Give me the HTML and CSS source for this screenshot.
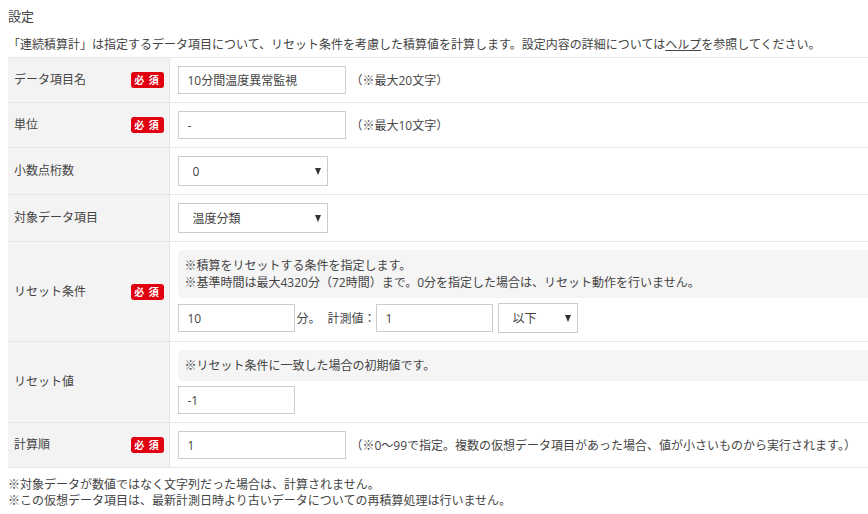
FILE: index.html
```html
<!DOCTYPE html>
<html lang="ja">
<head>
<meta charset="utf-8">
<title>設定</title>
<link rel="stylesheet" href="styles.css">
</head>
<body>
<h2 class="title">設定</h2>
<p class="desc">「連続積算計」は指定するデータ項目について、リセット条件を考慮した積算値を計算します。設定内容の詳細については<a class="link" href="#">ヘルプ</a>を参照してください。</p>
<table class="form">
  <tr>
    <th><div class="lbl"><span>データ項目名</span><span class="req">必 須</span></div></th>
    <td><div class="line"><input class="inp" type="text" value="10分間温度異常監視"><span class="hint">（※最大20文字）</span></div></td>
  </tr>
  <tr>
    <th><div class="lbl"><span>単位</span><span class="req">必 須</span></div></th>
    <td><div class="line"><input class="inp" type="text" value="-"><span class="hint">（※最大10文字）</span></div></td>
  </tr>
  <tr>
    <th><div class="lbl"><span>小数点桁数</span></div></th>
    <td><div class="line"><span class="sel"><select class="selbox"><option>0</option></select></span></div></td>
  </tr>
  <tr>
    <th><div class="lbl"><span>対象データ項目</span></div></th>
    <td><div class="line"><span class="sel"><select class="selbox"><option>温度分類</option></select></span></div></td>
  </tr>
  <tr>
    <th><div class="lbl"><span>リセット条件</span><span class="req">必 須</span></div></th>
    <td>
      <div class="note">※積算をリセットする条件を指定します。<br>※基準時間は最大4320分（72時間）まで。0分を指定した場合は、リセット動作を行いません。</div>
      <div class="line">
        <input class="inp small" type="text" value="10">
        <span class="unit">分。</span><span class="unit2">計測値：</span>
        <input class="inp small" type="text" value="1">
        <span class="sel sel-s"><select class="selbox"><option>以下</option></select></span>
      </div>
    </td>
  </tr>
  <tr>
    <th><div class="lbl"><span>リセット値</span></div></th>
    <td>
      <div class="note">※リセット条件に一致した場合の初期値です。</div>
      <div class="line"><input class="inp small" type="text" value="-1"></div>
    </td>
  </tr>
  <tr>
    <th><div class="lbl"><span>計算順</span><span class="req">必 須</span></div></th>
    <td><div class="line"><input class="inp" type="text" value="1"><span class="hint">（※0〜99で指定。複数の仮想データ項目があった場合、値が小さいものから実行されます。）</span></div></td>
  </tr>
</table>
<p class="foot">※対象データが数値ではなく文字列だった場合は、計算されません。<br>※この仮想データ項目は、最新計測日時より古いデータについての再積算処理は行いません。</p>
</body>
</html>
```
FILE: styles.css
```css
html, body {
  overflow: hidden;
}
body {
  margin: 8px 0 8px 8px;
  font-family: "Open Sans", "Noto Sans CJK JP", sans-serif;
  font-size: 12px;
  color: #444;
  background: #fff;
}
.title {
  margin: 0;
  font-size: 13px;
  font-weight: normal;
  line-height: 16px;
}
.desc {
  margin: 13px 0 4px;
  line-height: 16px;
  white-space: nowrap;
}
.link {
  color: #444;
  text-decoration: underline;
}
.form {
  width: 860px;
  border-collapse: collapse;
  border-top: 1px solid #e6e6ea;
}
.form tr {
  border-bottom: 1px solid #e6e6ea;
}
.form th {
  width: 161px;
  padding: 0 5px 0 6px;
  background: #f3f3f3;
  border-right: 1px solid #e6e6ea;
  font-weight: normal;
  text-align: left;
  vertical-align: middle;
  box-sizing: border-box;
}
.lbl {
  display: flex;
  align-items: center;
  justify-content: space-between;
  line-height: 16px;
}
.req {
  display: inline-block;
  width: 33px;
  height: 16px;
  line-height: 16px;
  background: #e0000f;
  color: #fff;
  font-family: "Noto Sans CJK JP", sans-serif;
  font-size: 10px;
  font-weight: bold;
  text-align: center;
  border-radius: 3px;
  letter-spacing: 1px;
}
.form td {
  padding: 8px 0 8px 8px;
  vertical-align: middle;
}
.line {
  display: flex;
  align-items: center;
  white-space: nowrap;
}
.inp {
  width: 168px;
  height: 28px;
  box-sizing: border-box;
  border: 1px solid #ccc;
  padding: 0 9px;
  margin: 0;
  font-family: inherit;
  font-size: 12px;
  color: #444;
  background: #fff;
  outline: none;
}
.inp.small {
  width: 117px;
}
.hint {
  margin-left: 5px;
}
.unit {
  margin-left: 2px;
}
.unit2 {
  margin-left: 7px;
  margin-right: 0;
}
.sel {
  position: relative;
  display: inline-block;
  width: 150px;
  height: 30px;
}
.sel-s {
  width: 80px;
  margin-left: 5px;
}
.sel::after {
  content: "";
  position: absolute;
  right: 7px;
  top: 12px;
  border-left: 3.5px solid transparent;
  border-right: 3.5px solid transparent;
  border-top: 7px solid #333;
  pointer-events: none;
}
.selbox {
  -webkit-appearance: none;
  appearance: none;
  width: 100%;
  height: 30px;
  box-sizing: border-box;
  border: 1px solid #ccc;
  border-radius: 0;
  background: #fff;
  padding: 0 14px;
  margin: 0;
  font-family: inherit;
  font-size: 12px;
  color: #444;
  outline: none;
}
.note {
  background: #f5f5f5;
  border-radius: 5px 0 0 5px;
  padding: 7px 7px;
  line-height: 17px;
  margin-bottom: 5px;
  white-space: nowrap;
}
.foot {
  margin: 9px 0 0;
  line-height: 16px;
}
```
